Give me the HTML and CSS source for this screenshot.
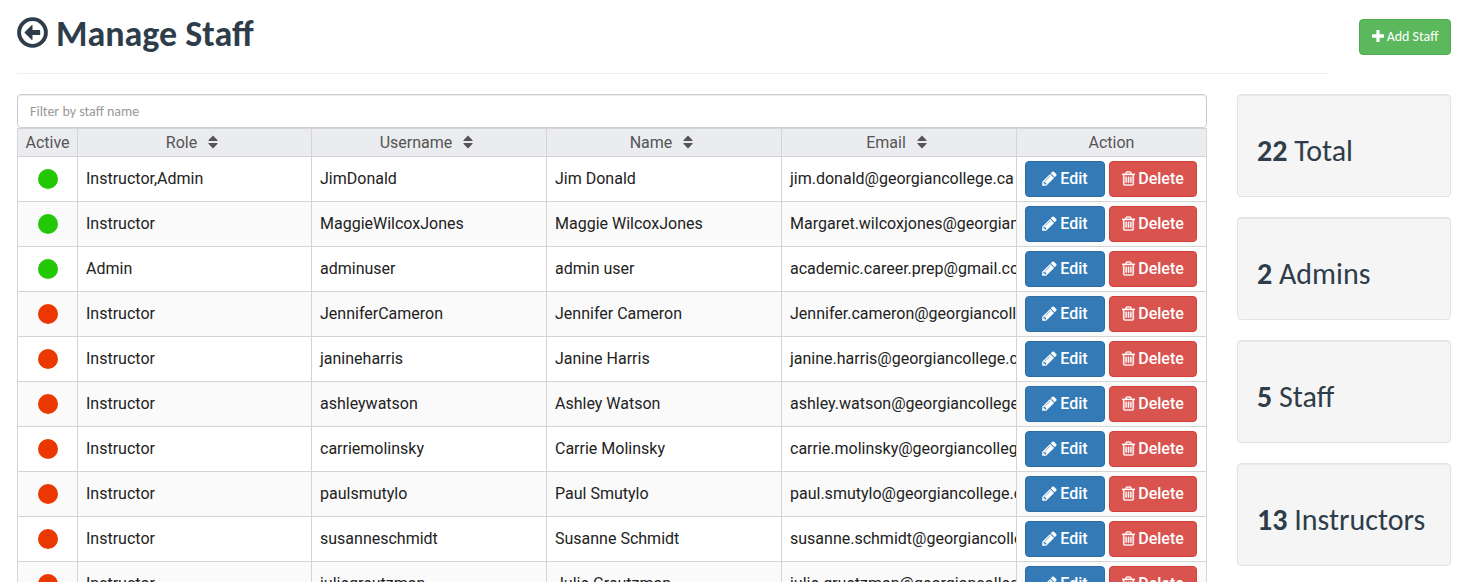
FILE: index.html
```
<!DOCTYPE html>
<html lang="en">
<head>
<meta charset="utf-8">
<title>Manage Staff</title>
<link rel="stylesheet" href="styles.css">
</head>
<body>
<svg class="defs" width="0" height="0">
<symbol id="pencil" viewBox="128 0 1536 1792"><path d="M491 1536l91-91-235-235-91 91v107h128v128h107zm523-928q0-22-22-22-10 0-17 7l-542 542q-7 7-7 17 0 22 22 22 10 0 17-7l542-542q7-7 7-17zm-54-192l416 416-832 832h-416v-416zm683 96q0 53-37 90l-166 166-416-416 166-165q36-38 90-38 53 0 91 38l235 234q37 39 37 91z"/></symbol>
<symbol id="trash" viewBox="192 0 1408 1792"><path stroke="currentColor" stroke-width="36" d="M704 736v576q0 14-9 23t-23 9h-64q-14 0-23-9t-9-23v-576q0-14 9-23t23-9h64q14 0 23 9t9 23zm256 0v576q0 14-9 23t-23 9h-64q-14 0-23-9t-9-23v-576q0-14 9-23t23-9h64q14 0 23 9t9 23zm256 0v576q0 14-9 23t-23 9h-64q-14 0-23-9t-9-23v-576q0-14 9-23t23-9h64q14 0 23 9t9 23zm128 724v-948h-896v948q0 22 7 40.5t14.5 27 10.5 8.5h832q3 0 10.5-8.5t14.5-27 7-40.5zm-672-1076h448l-48-117q-7-9-17-11h-317q-10 2-17 11zm928 32v64q0 14-9 23t-23 9h-96v948q0 83-47 143.5t-113 60.5h-832q-66 0-113-58.5t-47-141.5v-952h-96q-14 0-23-9t-9-23v-64q0-14 9-23t23-9h309l70-167q15-37 54-63t79-26h320q40 0 79 26t54 63l70 167h309q14 0 23 9t9 23z"/></symbol>
<symbol id="sort" viewBox="0 0 10 14"><path d="M5 .5 9.6 5.2q.3.8-.5.8H.9Q.1 6 .4 5.2zM5 13.5.4 8.8Q.1 8 .9 8h8.2q.8 0 .5.8z"/></symbol>
</svg>
<header class="top">
<div class="heading">
<svg class="back" viewBox="0 0 31 31"><circle cx="15.5" cy="15.5" r="13.4" fill="none" stroke="currentColor" stroke-width="3.9"/><path d="M7.8 15 14.6 8.2q.9-.7.9.5v4.2h7q.7 0 .7.7v3.8q0 .7-.7.7h-7v4.2q0 1.2-.9.5L7.8 16q-.5-.5 0-1z"/></svg>
<h1>Manage Staff</h1>
</div>
<button class="btn add"><svg viewBox="192 128 1408 1408"><path d="M1600 736v192q0 40-28 68t-68 28h-416v416q0 40-28 68t-68 28h-192q-40 0-68-28t-28-68v-416h-416q-40 0-68-28t-28-68v-192q0-40 28-68t68-28h416v-416q0-40 28-68t68-28h192q40 0 68 28t28 68v416h416q40 0 68 28t28 68z"/></svg><span>Add Staff</span></button>
</header>
<div class="content">
<main>
<input class="filter" type="text" placeholder="Filter by staff name">
<div class="table">
<div class="row head"><div>Active</div><div>Role<svg><use href="#sort"/></svg></div><div>Username<svg><use href="#sort"/></svg></div><div>Name<svg><use href="#sort"/></svg></div><div>Email<svg><use href="#sort"/></svg></div><div>Action</div></div>
<div class="row"><div class="status"><i class="dot on"></i></div><div>Instructor,Admin</div><div>JimDonald</div><div>Jim Donald</div><div>jim.donald@georgiancollege.ca</div><div class="actions"><button class="btn edit"><svg><use href="#pencil"/></svg>Edit</button><button class="btn delete"><svg><use href="#trash"/></svg>Delete</button></div></div>
<div class="row"><div class="status"><i class="dot on"></i></div><div>Instructor</div><div>MaggieWilcoxJones</div><div>Maggie WilcoxJones</div><div>Margaret.wilcoxjones@georgiancollege.ca</div><div class="actions"><button class="btn edit"><svg><use href="#pencil"/></svg>Edit</button><button class="btn delete"><svg><use href="#trash"/></svg>Delete</button></div></div>
<div class="row"><div class="status"><i class="dot on"></i></div><div>Admin</div><div>adminuser</div><div>admin user</div><div>academic.career.prep@gmail.com</div><div class="actions"><button class="btn edit"><svg><use href="#pencil"/></svg>Edit</button><button class="btn delete"><svg><use href="#trash"/></svg>Delete</button></div></div>
<div class="row"><div class="status"><i class="dot"></i></div><div>Instructor</div><div>JenniferCameron</div><div>Jennifer Cameron</div><div>Jennifer.cameron@georgiancollege.ca</div><div class="actions"><button class="btn edit"><svg><use href="#pencil"/></svg>Edit</button><button class="btn delete"><svg><use href="#trash"/></svg>Delete</button></div></div>
<div class="row"><div class="status"><i class="dot"></i></div><div>Instructor</div><div>janineharris</div><div>Janine Harris</div><div>janine.harris@georgiancollege.ca</div><div class="actions"><button class="btn edit"><svg><use href="#pencil"/></svg>Edit</button><button class="btn delete"><svg><use href="#trash"/></svg>Delete</button></div></div>
<div class="row"><div class="status"><i class="dot"></i></div><div>Instructor</div><div>ashleywatson</div><div>Ashley Watson</div><div>ashley.watson@georgiancollege.ca</div><div class="actions"><button class="btn edit"><svg><use href="#pencil"/></svg>Edit</button><button class="btn delete"><svg><use href="#trash"/></svg>Delete</button></div></div>
<div class="row"><div class="status"><i class="dot"></i></div><div>Instructor</div><div>carriemolinsky</div><div>Carrie Molinsky</div><div>carrie.molinsky@georgiancollege.ca</div><div class="actions"><button class="btn edit"><svg><use href="#pencil"/></svg>Edit</button><button class="btn delete"><svg><use href="#trash"/></svg>Delete</button></div></div>
<div class="row"><div class="status"><i class="dot"></i></div><div>Instructor</div><div>paulsmutylo</div><div>Paul Smutylo</div><div>paul.smutylo@georgiancollege.ca</div><div class="actions"><button class="btn edit"><svg><use href="#pencil"/></svg>Edit</button><button class="btn delete"><svg><use href="#trash"/></svg>Delete</button></div></div>
<div class="row"><div class="status"><i class="dot"></i></div><div>Instructor</div><div>susanneschmidt</div><div>Susanne Schmidt</div><div>susanne.schmidt@georgiancollege.ca</div><div class="actions"><button class="btn edit"><svg><use href="#pencil"/></svg>Edit</button><button class="btn delete"><svg><use href="#trash"/></svg>Delete</button></div></div>
<div class="row"><div class="status"><i class="dot"></i></div><div>Instructor</div><div>juliegreutzman</div><div>Julie Greutzman</div><div>julie.gruetzman@georgiancollege.ca</div><div class="actions"><button class="btn edit"><svg><use href="#pencil"/></svg>Edit</button><button class="btn delete"><svg><use href="#trash"/></svg>Delete</button></div></div>
</div>
</main>
<aside>
<div class="well"><span><b>22</b> Total</span></div>
<div class="well"><span><b>2</b> Admins</span></div>
<div class="well"><span><b>5</b> Staff</span></div>
<div class="well"><span><b>13</b> Instructors</span></div>
</aside>
</div>
</body>
</html>
```
FILE: styles.css
```
* { box-sizing: border-box; }
html, body { height: 582px; overflow: hidden; }
body { margin: 0; padding: 0 21px 0 17px; background: #fff; color: #2e3d49; font-family: Carlito, Calibri, Lato, sans-serif; }
svg { fill: currentColor; flex: none; }
.defs { display: none; }
.top { display: flex; justify-content: space-between; height: 94px; }
.heading { display: flex; width: 1312px; height: 74px; padding-top: 17px; border-bottom: 1px solid #eee; }
.back { width: 31px; height: 31px; }
h1 { margin: -3px 0 0 8px; font-size: 36px; line-height: 40px; font-weight: 700; white-space: nowrap; }
.btn { display: flex; align-items: center; justify-content: center; height: 36px; margin: 0; padding: 0; border: 1px solid; border-radius: 4px; color: #fff; font: 500 16px/20px Roboto, sans-serif; white-space: nowrap; }
.add { width: 92px; margin-top: 19px; background: #5cb85c; border-color: #4cae4c; font: 14px/20px Carlito, Calibri, Lato, sans-serif; }
.add svg { width: 12px; height: 12px; margin: 0 3px 2px 0; }
.content { display: flex; justify-content: space-between; }
main { width: 1190px; }
.filter { display: block; width: 100%; height: 34px; padding: 0 12px; border: 1px solid #ccc; border-radius: 4px; outline: 0; font: 14px/20px Carlito, Calibri, Lato, sans-serif; box-shadow: inset 0 1px 1px rgba(0,0,0,.075); }
.filter::placeholder { color: #999; opacity: 1; }
.table { border: 1px solid #d4d4d4; font: 16px/20px Roboto, sans-serif; color: #222; }
.row { display: grid; grid-template-columns: 59px 234px 235px 235px 235px 190px; height: 45px; border-bottom: 1px solid #d4d4d4; }
.row:nth-child(odd):not(.head) { background: #fafafa; }
.row > div { display: flex; align-items: center; min-width: 0; overflow: hidden; white-space: nowrap; padding-left: 8px; border-left: 1px solid #d4d4d4; }
.row > div:first-child { border-left: 0; }
.row > .status { padding: 0 0 0 1px; justify-content: center; }
.dot { width: 20px; height: 20px; border-radius: 50%; background: #eb3800; }
.dot.on { background: #22c705; }
.head { height: 28px; background: #ebecf0; color: #555; }
.head > div, .head > div:first-child { padding: 0; justify-content: center; }
.head svg { width: 10px; height: 14px; margin: 0 5px 1px 11px; }
.row > .actions { gap: 4px; }
.edit { width: 80px; background: #337ab7; border-color: #2e6da4; }
.edit svg { width: 15px; height: 17px; margin: 0 3px 1px 0; }
.delete { width: 88px; background: #d9534f; border-color: #d43f3a; }
.delete svg { width: 13px; height: 17px; margin: 0 3px 1px 0; }
aside { width: 214px; display: flex; flex-direction: column; gap: 20px; }
.well { height: 103px; padding: 38px 19px 0; border: 1px solid #e3e3e3; border-radius: 4px; background: #f5f5f5; box-shadow: inset 0 1px 1px rgba(0,0,0,.05); font-size: 30px; line-height: 36px; white-space: nowrap; }
```
